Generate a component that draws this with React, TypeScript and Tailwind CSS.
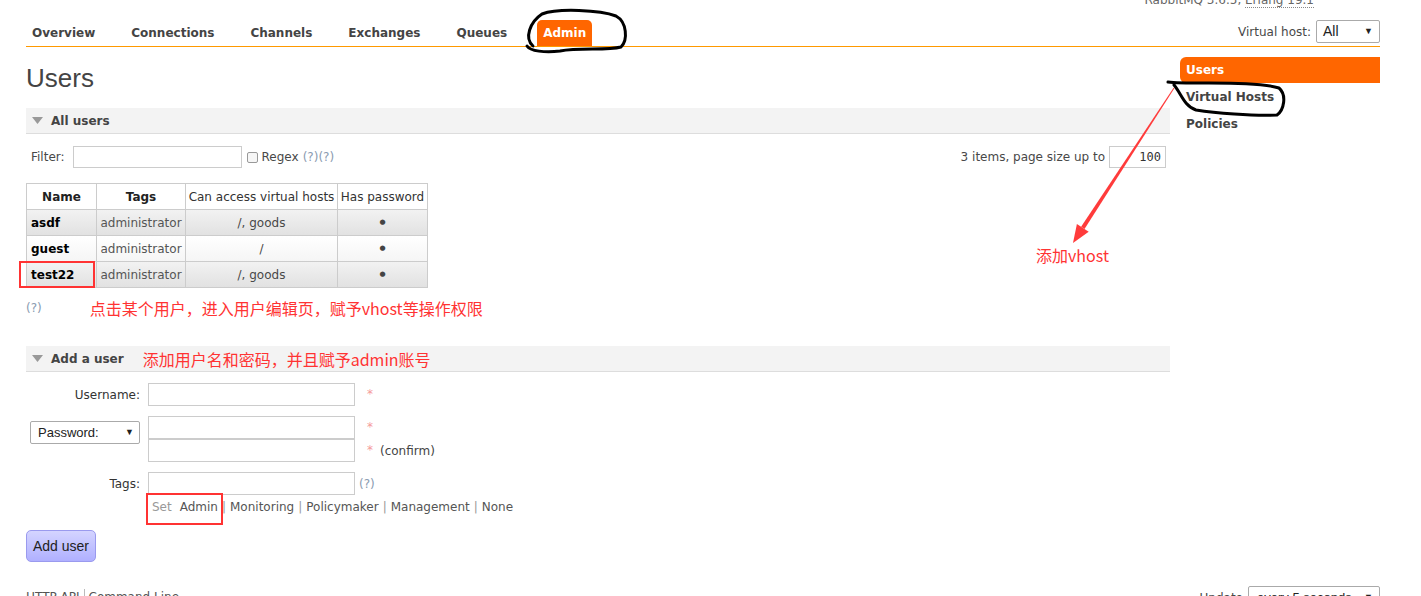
import React from "react";

const tabs = ["Overview", "Connections", "Channels", "Exchanges", "Queues", "Admin"];

const users = [
  { name: "asdf", tags: "administrator", vhosts: "/, goods" },
  { name: "guest", tags: "administrator", vhosts: "/" },
  { name: "test22", tags: "administrator", vhosts: "/, goods" },
];

const Triangle = () => (
  <svg width="11" height="7" viewBox="0 0 11 7" className="mr-[8px]">
    <polygon points="0,0 11,0 5.5,7" fill="#999999" />
  </svg>
);

const SectionBar = ({ title, note }: { title: string; note?: string }) => (
  <div className="flex items-center h-[26px] pl-[6px] bg-[#f3f3f3] border-b border-[#dddddd]">
    <Triangle />
    <span className="font-bold text-[#444]">{title}</span>
    {note && (
      <span className="ml-[19px] text-[16px] text-[#ff3333] font-['Noto_Sans_CJK_SC',sans-serif]">
        {note}
      </span>
    )}
  </div>
);

const Help = () => <span className="text-[#8a9bb0]">(?)</span>;

const Star = () => <span className="text-[#f59a9a] self-start mt-[2px]">*</span>;

const TextInput = () => (
  <div className="w-[207px] h-[23px] border border-[#cccccc] bg-white" />
);

export default function App() {
  return (
    <div className="relative w-full h-[596px] overflow-hidden bg-white text-[12px] text-[#484848] font-['DejaVu_Sans',sans-serif]">
      <div className="pl-[26px] pr-[41px]">
        {/* header */}
        <div className="flex justify-end pr-[66px] -mt-[7px] leading-[14px] text-[#666]">
          <span>
            RabbitMQ 3.6.5,{" "}
            <span className="border-b border-dotted border-[#888]">Erlang 19.1</span>
          </span>
        </div>
        <div className="flex items-end justify-between h-[40px] border-b border-[#ff9900]">
          <ul className="flex gap-[24px]">
            {tabs.map((t) =>
              t === "Admin" ? (
                <li
                  key={t}
                  className="h-[26px] flex items-center px-[6px] bg-[#ff6600] text-white font-bold rounded-t-[5px]"
                >
                  {t}
                </li>
              ) : (
                <li key={t} className="h-[26px] flex items-center px-[6px] text-[#444] font-bold">
                  {t}
                </li>
              )
            )}
          </ul>
          <div className="flex items-center mb-[3px]">
            <span className="mr-[5px]">Virtual host:</span>
            <div className="w-[64px] h-[23px] border border-[#aaaaaa] rounded-[2px] flex items-center justify-between pl-[6px] pr-[6px] font-['Liberation_Sans',sans-serif] text-[14px] text-[#222]">
              <span>All</span>
              <span className="text-[9px]">▼</span>
            </div>
          </div>
        </div>

        {/* body */}
        <div className="flex">
          <div className="w-[1144px]">
            <h1 className="mt-[15px] h-[32px] leading-[32px] text-[26px] text-[#444] font-['Liberation_Sans',sans-serif]">
              Users
            </h1>

            <div className="mt-[14px]">
              <SectionBar title="All users" />
            </div>

            <div className="mt-[12px] flex items-center justify-between h-[22px]">
              <div className="flex items-center pl-[5px]">
                <span>Filter:</span>
                <div className="ml-[8px] w-[169px] h-[22px] border border-[#cccccc]" />
                <div className="ml-[5px] w-[11px] h-[11px] border border-[#999] rounded-[2px] bg-[#f6f6f6]" />
                <span className="ml-[4px]">Regex</span>
                <span className="ml-[4px]">
                  <Help />
                  <Help />
                </span>
              </div>
              <div className="flex items-center pr-[4px]">
                <span>3 items, page size up to</span>
                <div className="ml-[4px] w-[57px] h-[22px] border border-[#cccccc] flex items-center justify-end pr-[4px] font-['DejaVu_Sans_Mono',monospace] text-[12px] text-[#333]">
                  100
                </div>
              </div>
            </div>

            <table className="mt-[15px] border-collapse table-fixed w-[401px]">
              <thead>
                <tr className="h-[26px] bg-white">
                  <th className="w-[70px] border border-[#cccccc] font-bold text-[#222]">Name</th>
                  <th className="w-[89px] border border-[#cccccc] font-bold text-[#222]">Tags</th>
                  <th className="w-[152px] border border-[#cccccc] font-normal text-[#333] whitespace-nowrap">
                    Can access virtual hosts
                  </th>
                  <th className="w-[90px] border border-[#cccccc] font-normal text-[#333] whitespace-nowrap">
                    Has password
                  </th>
                </tr>
              </thead>
              <tbody>
                {users.map((u, i) => (
                  <tr
                    key={u.name}
                    className={
                      i % 2 === 0
                        ? "h-[26px] bg-linear-to-b from-[#f2f2f2] to-[#e1e1e1]"
                        : "h-[26px] bg-linear-to-b from-[#ffffff] to-[#f5f5f5]"
                    }
                  >
                    <td className="border border-[#cccccc] pl-[4px] font-bold text-black">{u.name}</td>
                    <td className="border border-[#cccccc] text-center text-[#555]">{u.tags}</td>
                    <td className="border border-[#cccccc] text-center">{u.vhosts}</td>
                    <td className="border border-[#cccccc] text-center text-[7px] text-[#444]">●</td>
                  </tr>
                ))}
              </tbody>
            </table>

            <div className="mt-[10px] flex items-center h-[20px]">
              <Help />
              <span className="ml-[48px] text-[16px] text-[#ff3333] font-['Noto_Sans_CJK_SC',sans-serif]">
                点击某个用户，进入用户编辑页，赋予vhost等操作权限
              </span>
            </div>

            <div className="mt-[28px]">
              <SectionBar title="Add a user" note="添加用户名和密码，并且赋予admin账号" />
            </div>

            {/* form */}
            <div className="mt-[11px] flex flex-col">
              <div className="flex items-center">
                <div className="w-[114px] text-right text-[#333]">Username:</div>
                <div className="ml-[8px] flex items-center gap-[12px]">
                  <TextInput />
                  <Star />
                </div>
              </div>

              <div className="mt-[10px] flex items-start">
                <div className="w-[114px] flex justify-end pt-[5px]">
                  <div className="w-[110px] h-[23px] border border-[#aaaaaa] rounded-[2px] flex items-center justify-between pl-[7px] pr-[5px] font-['Liberation_Sans',sans-serif] text-[13px] text-[#222]">
                    <span>Password:</span>
                    <span className="text-[9px]">▼</span>
                  </div>
                </div>
                <div className="ml-[8px] flex flex-col">
                  <div className="flex items-center gap-[12px]">
                    <TextInput />
                    <Star />
                  </div>
                  <div className="flex items-center gap-[12px]">
                    <TextInput />
                    <Star />
                    <span className="-ml-[5px] text-[#444]">(confirm)</span>
                  </div>
                </div>
              </div>

              <div className="mt-[10px] flex items-center">
                <div className="w-[114px] text-right text-[#333]">Tags:</div>
                <div className="ml-[8px] flex items-center gap-[4px]">
                  <TextInput />
                  <Help />
                </div>
              </div>

              <div className="mt-[5px] ml-[126px] h-[14px] flex items-center text-[#555]">
                <span className="text-[#999]">Set</span>
                <span className="ml-[8px]">Admin</span>
                <span className="mx-[4px] text-[#999]">|</span>
                <span>Monitoring</span>
                <span className="mx-[4px] text-[#999]">|</span>
                <span>Policymaker</span>
                <span className="mx-[4px] text-[#999]">|</span>
                <span>Management</span>
                <span className="mx-[4px] text-[#999]">|</span>
                <span>None</span>
              </div>

              <div className="mt-[16px]">
                <button className="w-[70px] h-[32px] rounded-[5px] border border-[#9a9aee] bg-linear-to-b from-[#d4d4ff] to-[#b0b0ff] font-['Liberation_Sans',sans-serif] text-[14px] text-[#222]">
                  Add user
                </button>
              </div>
            </div>
          </div>

          {/* right sidebar */}
          <div className="ml-[10px] w-[200px] mt-[10px] font-bold">
            <div className="h-[26px] flex items-center pl-[6px] bg-[#ff6600] text-white rounded-l-[6px]">
              Users
            </div>
            <div className="h-[27px] flex items-center pl-[6px] text-[#444]">Virtual Hosts</div>
            <div className="h-[27px] flex items-center pl-[6px] text-[#444]">Policies</div>
          </div>
        </div>

        {/* footer */}
        <div className="mt-[24px] flex items-start justify-between">
          <div className="flex items-center pt-[2px] text-[#555]">
            <span>HTTP API</span>
            <span className="mx-[4px] w-px h-[16px] bg-[#bbb]" />
            <span>Command Line</span>
          </div>
          <div className="flex items-start">
            <span className="pt-[3px] mr-[5px]">Update</span>
            <div className="w-[132px] h-[23px] border border-[#aaaaaa] rounded-[2px] flex items-center justify-between pl-[8px] pr-[6px] whitespace-nowrap font-['Liberation_Sans',sans-serif] text-[13px] text-[#222]">
              <span>every 5 seconds</span>
              <span className="text-[9px]">▼</span>
            </div>
          </div>
        </div>
      </div>

      {/* annotations drawn over the screenshot */}
      <div className="absolute left-[1036px] top-[243px] text-[16px] leading-[24px] text-[#ff3333] font-['Noto_Sans_CJK_SC',sans-serif]">
        添加vhost
      </div>
      <div className="absolute left-[19px] top-[261px] w-[76px] h-[27px] border-2 border-[#f33]" />
      <div className="absolute left-[146px] top-[493px] w-[77px] h-[32px] border-2 border-[#f33]" />
      <svg
        className="absolute left-0 top-0 pointer-events-none"
        width="1421"
        height="596"
        viewBox="0 0 1421 596"
      >
        <path
          d="M 533 46 C 524 38, 530 22, 542 14 C 558 8, 600 10, 616 16 C 627 22, 628 40, 621 47 C 606 51, 580 47, 560 51 C 545 53, 530 51, 527 46"
          fill="none"
          stroke="#000"
          strokeWidth="3"
          strokeLinecap="round"
        />
        <path
          d="M 1168 82 C 1190 85, 1252 80, 1279 88 C 1287 95, 1284 110, 1277 115 C 1252 116, 1215 113, 1196 110 C 1184 106, 1181 93, 1174 85"
          fill="none"
          stroke="#000"
          strokeWidth="3"
          strokeLinecap="round"
        />
        <polygon points="1174.4,88.3 1173.6,87.7 1081.1,226.8 1084.5,229" fill="#ff3b3b" />
        <polygon points="1088.7,231.7 1076.9,224.1 1073,243" fill="#ff3b3b" />
      </svg>
    </div>
  );
}
